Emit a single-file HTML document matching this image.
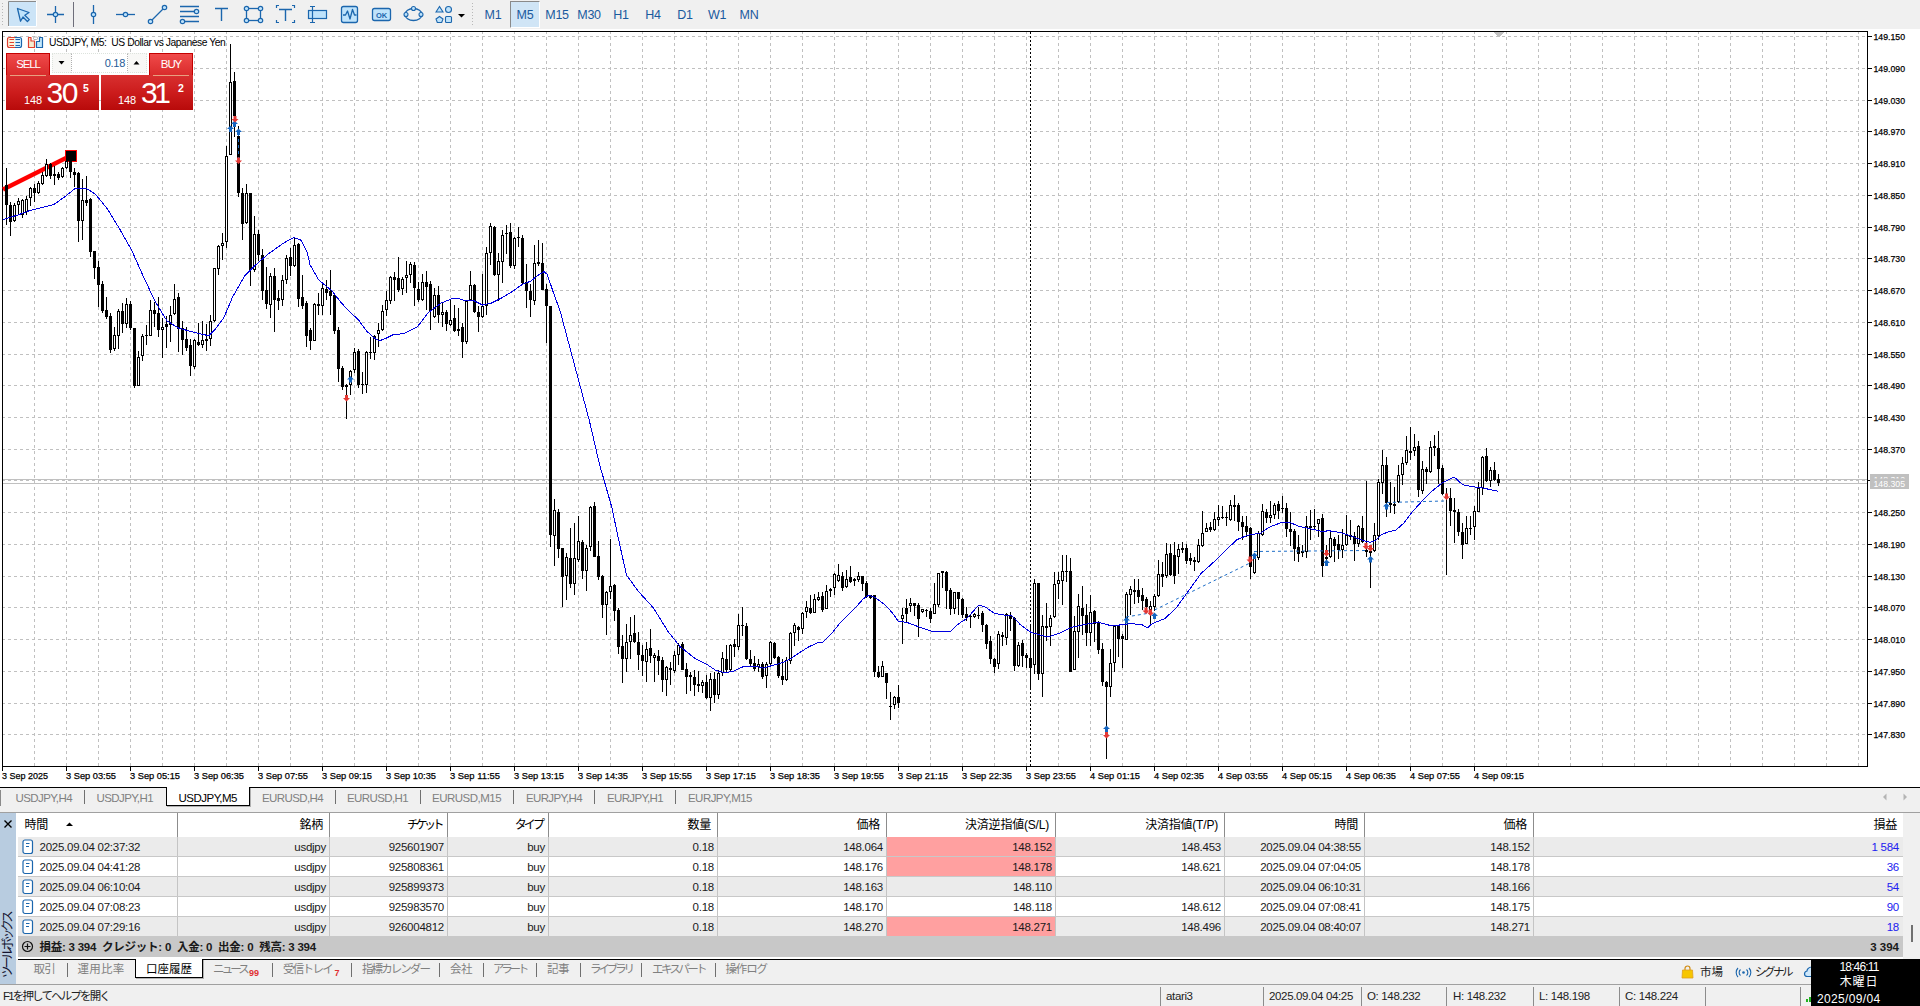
<!DOCTYPE html><html><head><meta charset="utf-8"><title>USDJPY,M5</title><style>
*{box-sizing:border-box;margin:0;padding:0}
html,body{width:1920px;height:1006px;overflow:hidden;background:#f0f0f0}
body{position:relative;font-family:"Liberation Sans","Noto Sans CJK JP",sans-serif;font-size:12px;color:#000}
.abs{position:absolute}
.tf{position:absolute;top:1px;height:27px;width:32px;line-height:28px;text-align:center;color:#1a5a9e;font-size:12.5px;letter-spacing:-0.3px}
.tfsel{background:#d0e5f6;border-left:1px solid #8a8a8a;border-top:1px solid #8a8a8a;border-right:1px solid #fff;border-bottom:1px solid #fff;line-height:26px}
.ctab{position:absolute;top:791px;height:14px;line-height:14px;font-size:11.5px;color:#808080;white-space:nowrap;letter-spacing:-0.35px}
.csep{position:absolute;top:790px;width:1px;height:14px;background:#707070}
.btab{position:absolute;top:961.5px;height:14px;line-height:14px;font-size:11.5px;color:#808080;white-space:nowrap;letter-spacing:-0.3px}
.bsep{position:absolute;top:963px;width:1px;height:14px;background:#707070}
.hd{position:absolute;top:813px;height:24px;line-height:25px;font-size:12px;text-align:right;padding-right:6px;white-space:nowrap;border-right:1px solid #8c8c8c;letter-spacing:-0.2px}
.row{position:absolute;left:18px;width:1885px;height:20px;border-bottom:1px solid #c8c8c8}
.c{position:absolute;top:0;height:19px;line-height:20px;font-size:11.5px;text-align:right;padding-right:3px;border-right:1px solid #c4c4c4;white-space:nowrap;color:#1a1a1a;letter-spacing:-0.25px}
.st{position:absolute;top:989px;height:14px;line-height:14px;font-size:11.5px;white-space:nowrap;color:#222;letter-spacing:-0.35px}
.ssep{position:absolute;top:987px;width:1px;height:19px;background:#8c8c8c}
</style></head><body>
<svg id="chart" width="1920" height="790" viewBox="0 0 1920 790" style="position:absolute;left:0;top:0" shape-rendering="crispEdges">
<rect x="0" y="29" width="1920" height="758" fill="#fff"/>
<path d="M2 36.5H1867M2 68.5H1867M2 100.5H1867M2 131.5H1867M2 163.5H1867M2 195.5H1867M2 227.5H1867M2 258.5H1867M2 290.5H1867M2 322.5H1867M2 354.5H1867M2 385.5H1867M2 417.5H1867M2 449.5H1867M2 480.5H1867M2 512.5H1867M2 544.5H1867M2 576.5H1867M2 607.5H1867M2 639.5H1867M2 671.5H1867M2 703.5H1867M2 734.5H1867" stroke="#c0c0c0" stroke-width="1" stroke-dasharray="3 3" fill="none"/>
<path d="M34.5 31V766M66.5 31V766M98.5 31V766M130.5 31V766M162.5 31V766M194.5 31V766M226.5 31V766M258.5 31V766M290.5 31V766M322.5 31V766M354.5 31V766M386.5 31V766M418.5 31V766M450.5 31V766M482.5 31V766M514.5 31V766M546.5 31V766M578.5 31V766M610.5 31V766M642.5 31V766M674.5 31V766M706.5 31V766M738.5 31V766M770.5 31V766M802.5 31V766M834.5 31V766M866.5 31V766M898.5 31V766M930.5 31V766M962.5 31V766M994.5 31V766M1026.5 31V766M1058.5 31V766M1090.5 31V766M1122.5 31V766M1154.5 31V766M1186.5 31V766M1218.5 31V766M1250.5 31V766M1282.5 31V766M1314.5 31V766M1346.5 31V766M1378.5 31V766M1410.5 31V766M1442.5 31V766M1474.5 31V766M1506.5 31V766M1538.5 31V766M1570.5 31V766M1602.5 31V766M1634.5 31V766M1666.5 31V766M1698.5 31V766M1730.5 31V766M1762.5 31V766M1794.5 31V766M1826.5 31V766M1858.5 31V766" stroke="#c0c0c0" stroke-width="1" stroke-dasharray="3 3" fill="none"/>
<path d="M3 479.5H1867M3 483.5H1867" stroke="#c0c0c0" stroke-width="1" fill="none"/>
<path d="M1493 32H1504L1498.5 37.5Z" fill="#c0c0c0"/>
<path d="M1030.5 32V766" stroke="#000" stroke-width="1" stroke-dasharray="2 2" fill="none"/>
<path d="M2 31.5H1868M2.5 31V771M1867.5 31V767M2 766.5H1868" stroke="#000" stroke-width="1" fill="none"/>
<path d="M1868 36.5H1872M1868 68.5H1872M1868 100.5H1872M1868 131.5H1872M1868 163.5H1872M1868 195.5H1872M1868 227.5H1872M1868 258.5H1872M1868 290.5H1872M1868 322.5H1872M1868 354.5H1872M1868 385.5H1872M1868 417.5H1872M1868 449.5H1872M1868 480.5H1872M1868 512.5H1872M1868 544.5H1872M1868 576.5H1872M1868 607.5H1872M1868 639.5H1872M1868 671.5H1872M1868 703.5H1872M1868 734.5H1872" stroke="#000" stroke-width="1" fill="none"/>
<path d="M66.5 767V771M130.5 767V771M194.5 767V771M258.5 767V771M322.5 767V771M386.5 767V771M450.5 767V771M514.5 767V771M578.5 767V771M642.5 767V771M706.5 767V771M770.5 767V771M834.5 767V771M898.5 767V771M962.5 767V771M1026.5 767V771M1090.5 767V771M1154.5 767V771M1218.5 767V771M1282.5 767V771M1346.5 767V771M1410.5 767V771M1474.5 767V771" stroke="#000" stroke-width="1" fill="none"/>
<g font-family="'Liberation Sans',sans-serif" font-size="9.7px" fill="#000" stroke="#000" stroke-width="0.25" shape-rendering="auto">
<text x="1873.5" y="39.6" textLength="31.5" lengthAdjust="spacingAndGlyphs">149.150</text>
<text x="1873.5" y="71.6" textLength="31.5" lengthAdjust="spacingAndGlyphs">149.090</text>
<text x="1873.5" y="103.6" textLength="31.5" lengthAdjust="spacingAndGlyphs">149.030</text>
<text x="1873.5" y="134.6" textLength="31.5" lengthAdjust="spacingAndGlyphs">148.970</text>
<text x="1873.5" y="166.6" textLength="31.5" lengthAdjust="spacingAndGlyphs">148.910</text>
<text x="1873.5" y="198.6" textLength="31.5" lengthAdjust="spacingAndGlyphs">148.850</text>
<text x="1873.5" y="230.6" textLength="31.5" lengthAdjust="spacingAndGlyphs">148.790</text>
<text x="1873.5" y="261.6" textLength="31.5" lengthAdjust="spacingAndGlyphs">148.730</text>
<text x="1873.5" y="293.6" textLength="31.5" lengthAdjust="spacingAndGlyphs">148.670</text>
<text x="1873.5" y="325.6" textLength="31.5" lengthAdjust="spacingAndGlyphs">148.610</text>
<text x="1873.5" y="357.6" textLength="31.5" lengthAdjust="spacingAndGlyphs">148.550</text>
<text x="1873.5" y="388.6" textLength="31.5" lengthAdjust="spacingAndGlyphs">148.490</text>
<text x="1873.5" y="420.6" textLength="31.5" lengthAdjust="spacingAndGlyphs">148.430</text>
<text x="1873.5" y="452.6" textLength="31.5" lengthAdjust="spacingAndGlyphs">148.370</text>
<text x="1873.5" y="483.6" textLength="31.5" lengthAdjust="spacingAndGlyphs">148.310</text>
<text x="1873.5" y="515.6" textLength="31.5" lengthAdjust="spacingAndGlyphs">148.250</text>
<text x="1873.5" y="547.6" textLength="31.5" lengthAdjust="spacingAndGlyphs">148.190</text>
<text x="1873.5" y="579.6" textLength="31.5" lengthAdjust="spacingAndGlyphs">148.130</text>
<text x="1873.5" y="610.6" textLength="31.5" lengthAdjust="spacingAndGlyphs">148.070</text>
<text x="1873.5" y="642.6" textLength="31.5" lengthAdjust="spacingAndGlyphs">148.010</text>
<text x="1873.5" y="674.6" textLength="31.5" lengthAdjust="spacingAndGlyphs">147.950</text>
<text x="1873.5" y="706.6" textLength="31.5" lengthAdjust="spacingAndGlyphs">147.890</text>
<text x="1873.5" y="737.6" textLength="31.5" lengthAdjust="spacingAndGlyphs">147.830</text>
<text x="2" y="779.2" textLength="46" lengthAdjust="spacingAndGlyphs">3 Sep 2025</text>
<text x="66" y="779.2" textLength="50" lengthAdjust="spacingAndGlyphs">3 Sep 03:55</text>
<text x="130" y="779.2" textLength="50" lengthAdjust="spacingAndGlyphs">3 Sep 05:15</text>
<text x="194" y="779.2" textLength="50" lengthAdjust="spacingAndGlyphs">3 Sep 06:35</text>
<text x="258" y="779.2" textLength="50" lengthAdjust="spacingAndGlyphs">3 Sep 07:55</text>
<text x="322" y="779.2" textLength="50" lengthAdjust="spacingAndGlyphs">3 Sep 09:15</text>
<text x="386" y="779.2" textLength="50" lengthAdjust="spacingAndGlyphs">3 Sep 10:35</text>
<text x="450" y="779.2" textLength="50" lengthAdjust="spacingAndGlyphs">3 Sep 11:55</text>
<text x="514" y="779.2" textLength="50" lengthAdjust="spacingAndGlyphs">3 Sep 13:15</text>
<text x="578" y="779.2" textLength="50" lengthAdjust="spacingAndGlyphs">3 Sep 14:35</text>
<text x="642" y="779.2" textLength="50" lengthAdjust="spacingAndGlyphs">3 Sep 15:55</text>
<text x="706" y="779.2" textLength="50" lengthAdjust="spacingAndGlyphs">3 Sep 17:15</text>
<text x="770" y="779.2" textLength="50" lengthAdjust="spacingAndGlyphs">3 Sep 18:35</text>
<text x="834" y="779.2" textLength="50" lengthAdjust="spacingAndGlyphs">3 Sep 19:55</text>
<text x="898" y="779.2" textLength="50" lengthAdjust="spacingAndGlyphs">3 Sep 21:15</text>
<text x="962" y="779.2" textLength="50" lengthAdjust="spacingAndGlyphs">3 Sep 22:35</text>
<text x="1026" y="779.2" textLength="50" lengthAdjust="spacingAndGlyphs">3 Sep 23:55</text>
<text x="1090" y="779.2" textLength="50" lengthAdjust="spacingAndGlyphs">4 Sep 01:15</text>
<text x="1154" y="779.2" textLength="50" lengthAdjust="spacingAndGlyphs">4 Sep 02:35</text>
<text x="1218" y="779.2" textLength="50" lengthAdjust="spacingAndGlyphs">4 Sep 03:55</text>
<text x="1282" y="779.2" textLength="50" lengthAdjust="spacingAndGlyphs">4 Sep 05:15</text>
<text x="1346" y="779.2" textLength="50" lengthAdjust="spacingAndGlyphs">4 Sep 06:35</text>
<text x="1410" y="779.2" textLength="50" lengthAdjust="spacingAndGlyphs">4 Sep 07:55</text>
<text x="1474" y="779.2" textLength="50" lengthAdjust="spacingAndGlyphs">4 Sep 09:15</text>
</g>
<rect x="1870" y="474" width="39" height="15" fill="#c0c0c0"/>
<g font-family="'Liberation Sans',sans-serif" font-size="9.7px" fill="#fff" shape-rendering="auto"><text x="1873.5" y="486.6" textLength="31.5" lengthAdjust="spacingAndGlyphs">148.305</text></g>
<clipPath id="cp1"><rect x="1870" y="475" width="39" height="3.6"/></clipPath>
<g font-family="'Liberation Sans',sans-serif" font-size="9.7px" fill="#fff" shape-rendering="auto" clip-path="url(#cp1)"><text x="1873.5" y="482.6" textLength="31.5" lengthAdjust="spacingAndGlyphs">148.312</text></g>
<path d="M1868 480.5H1870" stroke="#000" stroke-width="1"/>
<path d="M3 189.5L68 157" stroke="#ff0000" stroke-width="4.2" fill="none" shape-rendering="auto"/>
<rect x="65.5" y="150.5" width="11" height="11" fill="#000" stroke="#ff0000" stroke-width="1"/>
<path d="M6.5 168V225M10.5 202V236M14.5 203V222M18.5 198V214M22.5 199V218M26.5 196V215M30.5 187V206M34.5 184V202M38.5 181V194M42.5 172V185M46.5 159V177M50.5 163V179M54.5 166V185M58.5 172V180M62.5 167V178M66.5 158V169M70.5 160V178M74.5 168V187M78.5 172V242M82.5 179V240M86.5 176V206M90.5 198V257M94.5 251V279M98.5 261V307M102.5 281V313M106.5 297V319M110.5 313V353M114.5 327V351M118.5 309V349M122.5 303V333M126.5 298V328M130.5 301V330M134.5 328V388M138.5 351V386M142.5 334V361M146.5 325V345M150.5 300V336M154.5 302V327M158.5 297V337M162.5 318V358M166.5 316V348M170.5 306V342M174.5 284V315M178.5 293V352M182.5 321V355M186.5 327V351M190.5 339V376M194.5 339V369M198.5 323V346M202.5 321V348M206.5 324V351M210.5 315V346M214.5 268V322M218.5 245V275M222.5 233V260M226.5 146V248M230.5 44V155M234.5 72V137M238.5 126V197M242.5 188V240M246.5 184V224M250.5 193V286M254.5 216V272M258.5 230V261M262.5 249V300M266.5 267V309M270.5 273V318M274.5 268V332M278.5 290V310M282.5 275V306M286.5 255V284M290.5 248V276M294.5 237V267M298.5 243V307M302.5 275V309M306.5 301V347M310.5 328V350M314.5 303V341M318.5 293V315M322.5 282V315M326.5 280V300M330.5 270V315M334.5 294V334M338.5 327V382M342.5 366V390M346.5 384V419M350.5 370V395M354.5 348V373M358.5 349V388M362.5 372V394M366.5 351V393M370.5 337V359M374.5 335V360M378.5 323V347M382.5 305V331M386.5 291V316M390.5 276V304M394.5 272V301M398.5 257V292M402.5 277V295M406.5 261V293M410.5 262V283M414.5 262V306M418.5 282V302M422.5 274V301M426.5 271V310M430.5 281V330M434.5 288V318M438.5 286V323M442.5 302V327M446.5 310V331M450.5 299V326M454.5 305V332M458.5 308V336M462.5 323V358M466.5 300V344M470.5 271V301M474.5 284V313M478.5 306V332M482.5 274V318M486.5 247V315M490.5 223V265M494.5 226V276M498.5 253V301M502.5 230V283M506.5 225V254M510.5 223V268M514.5 237V269M518.5 227V247M522.5 235V284M526.5 264V308M530.5 284V317M534.5 245V305M538.5 240V266M542.5 243V290M546.5 284V343M550.5 306V547M554.5 499V566M558.5 509V558M562.5 548V607M566.5 553V600M570.5 528V588M574.5 523V595M578.5 516V562M582.5 540V579M586.5 545V591M590.5 506V551M594.5 502V557M598.5 541V580M602.5 575V618M606.5 591V635M610.5 539V599M614.5 584V621M618.5 608V654M622.5 635V683M626.5 624V672M630.5 617V659M634.5 615V643M638.5 632V670M642.5 645V676M646.5 642V682M650.5 629V663M654.5 653V682M658.5 650V675M662.5 657V692M666.5 666V696M670.5 662V685M674.5 651V673M678.5 643V665M682.5 642V670M686.5 663V694M690.5 672V691M694.5 670V696M698.5 671V692M702.5 680V693M706.5 675V699M710.5 673V711M714.5 672V703M718.5 670V699M722.5 652V676M726.5 645V673M730.5 644V671M734.5 639V657M738.5 614V650M742.5 607V636M746.5 623V660M750.5 650V666M754.5 656V671M758.5 659V672M762.5 662V679M766.5 662V688M770.5 641V666M774.5 642V659M778.5 656V678M782.5 659V685M786.5 657V681M790.5 632V664M794.5 623V646M798.5 626V641M802.5 612V634M806.5 601V618M810.5 595V614M814.5 594V613M818.5 592V601M822.5 592V612M826.5 585V609M830.5 588V597M834.5 573V595M838.5 564V582M842.5 572V591M846.5 570V588M850.5 566V583M854.5 578V586M858.5 572V582M862.5 576V591M866.5 581V598M870.5 595V599M874.5 595V677M878.5 666V678M882.5 661V677M886.5 673V699M890.5 692V720M894.5 696V709M898.5 685V708M902.5 608V644M906.5 599V623M910.5 598V612M914.5 603V616M918.5 603V637M922.5 609V613M926.5 609V617M930.5 608V623M934.5 583V614M938.5 573V607M942.5 571V588M946.5 571V609M950.5 588V615M954.5 592V614M958.5 592V615M962.5 598V618M966.5 607V621M970.5 615V628M974.5 613V618M978.5 607V619M982.5 611V632M986.5 624V649M990.5 636V664M994.5 658V673M998.5 631V669M1002.5 632V646M1006.5 613V645M1010.5 612V631M1014.5 617V671M1018.5 642V667M1022.5 640V667M1026.5 653V668M1030.5 626V688M1034.5 579V674M1038.5 583V680M1042.5 615V697M1046.5 603V641M1050.5 615V646M1054.5 572V618M1058.5 572V599M1062.5 555V605M1066.5 555V582M1070.5 558V672M1074.5 616V670M1078.5 594V658M1082.5 586V635M1086.5 604V646M1090.5 595V646M1094.5 610V642M1098.5 621V654M1102.5 643V686M1106.5 681V759M1110.5 649V697M1114.5 625V672M1118.5 625V657M1122.5 634V668M1126.5 592V640M1130.5 586V615M1134.5 579V604M1138.5 579V603M1142.5 588V610M1146.5 597V612M1150.5 601V626M1154.5 594V611M1158.5 560V597M1162.5 562V587M1166.5 543V578M1170.5 544V576M1174.5 542V584M1178.5 544V574M1182.5 542V553M1186.5 544V564M1190.5 553V565M1194.5 557V571M1198.5 539V563M1202.5 511V547M1206.5 523V532M1210.5 522V532M1214.5 512V531M1218.5 505V526M1222.5 506V519M1226.5 512V526M1230.5 500V521M1234.5 495V521M1238.5 503V531M1242.5 516V540M1246.5 516V537M1250.5 527V579M1254.5 554V574M1258.5 531V560M1262.5 504V536M1266.5 509V523M1270.5 501V523M1274.5 503V519M1278.5 501V519M1282.5 496V513M1286.5 503V537M1290.5 512V546M1294.5 529V561M1298.5 535V562M1302.5 545V557M1306.5 516V558M1310.5 510V540M1314.5 509V530M1318.5 519V537M1322.5 514V577M1326.5 545V560M1330.5 531V558M1334.5 537V562M1338.5 535V559M1342.5 529V558M1346.5 515V546M1350.5 520V540M1354.5 532V561M1358.5 525V547M1362.5 516V543M1366.5 481V557M1370.5 550V588M1374.5 523V552M1378.5 479V540M1382.5 450V494M1386.5 457V517M1390.5 482V513M1394.5 487V514M1398.5 465V503M1402.5 457V485M1406.5 436V465M1410.5 427V460M1414.5 434V456M1418.5 441V497M1422.5 461V494M1426.5 467V484M1430.5 441V473M1434.5 435V456M1438.5 431V484M1442.5 465V495M1446.5 488V575M1450.5 488V526M1454.5 498V543M1458.5 509V536M1462.5 523V559M1466.5 516V544M1470.5 516V535M1474.5 506V540M1478.5 482V512M1482.5 456V495M1486.5 448V482M1490.5 467V487M1494.5 462V481M1498.5 474V486" stroke="#000" stroke-width="1" fill="none"/>
<path d="M5 185h3V205h-3ZM9 205h3V222h-3ZM33 188h3V193h-3ZM49 164h3V176h-3ZM53 174h3V176h-3ZM57 174h3V178h-3ZM69 161h3V172h-3ZM73 172h3V175h-3ZM77 173h3V221h-3ZM85 200h3V203h-3ZM89 199h3V252h-3ZM93 251h3V268h-3ZM97 267h3V285h-3ZM101 284h3V311h-3ZM105 310h3V317h-3ZM109 316h3V350h-3ZM121 311h3V324h-3ZM129 304h3V328h-3ZM133 328h3V386h-3ZM145 335h3V336h-3ZM153 310h3V314h-3ZM157 313h3V330h-3ZM165 324h3V327h-3ZM177 297h3V329h-3ZM181 328h3V340h-3ZM185 339h3V348h-3ZM189 345h3V366h-3ZM197 342h3V345h-3ZM205 339h3V341h-3ZM233 81h3V116h-3ZM237 136h3V193h-3ZM241 193h3V224h-3ZM249 193h3V270h-3ZM257 234h3V255h-3ZM261 255h3V291h-3ZM265 290h3V304h-3ZM273 276h3V300h-3ZM277 298h3V301h-3ZM289 257h3V266h-3ZM297 244h3V299h-3ZM301 297h3V306h-3ZM305 303h3V336h-3ZM309 330h3V341h-3ZM317 304h3V306h-3ZM325 289h3V293h-3ZM329 291h3V296h-3ZM333 295h3V331h-3ZM337 330h3V369h-3ZM341 368h3V387h-3ZM345 385h3V387h-3ZM357 351h3V385h-3ZM361 384h3V385h-3ZM369 352h3V353h-3ZM393 277h3V280h-3ZM397 278h3V290h-3ZM413 265h3V288h-3ZM417 289h3V300h-3ZM425 282h3V287h-3ZM429 284h3V311h-3ZM437 295h3V315h-3ZM445 312h3V324h-3ZM453 318h3V331h-3ZM457 329h3V331h-3ZM461 327h3V342h-3ZM473 285h3V312h-3ZM477 312h3V317h-3ZM493 227h3V275h-3ZM505 233h3V234h-3ZM509 232h3V266h-3ZM517 237h3V238h-3ZM521 238h3V283h-3ZM525 282h3V291h-3ZM529 291h3V300h-3ZM537 262h3V264h-3ZM541 263h3V290h-3ZM545 289h3V306h-3ZM549 306h3V535h-3ZM557 512h3V549h-3ZM561 548h3V577h-3ZM569 558h3V584h-3ZM581 542h3V571h-3ZM593 506h3V557h-3ZM597 556h3V577h-3ZM601 576h3V605h-3ZM613 585h3V611h-3ZM617 610h3V647h-3ZM621 646h3V659h-3ZM633 633h3V642h-3ZM637 642h3V655h-3ZM641 655h3V661h-3ZM649 648h3V656h-3ZM657 656h3V661h-3ZM661 660h3V680h-3ZM669 668h3V670h-3ZM681 644h3V670h-3ZM685 669h3V677h-3ZM689 675h3V677h-3ZM693 677h3V685h-3ZM697 684h3V686h-3ZM705 682h3V698h-3ZM713 679h3V695h-3ZM725 659h3V670h-3ZM733 644h3V647h-3ZM741 625h3V626h-3ZM745 626h3V659h-3ZM749 659h3V664h-3ZM753 663h3V669h-3ZM761 664h3V677h-3ZM773 643h3V658h-3ZM777 657h3V676h-3ZM781 676h3V680h-3ZM797 627h3V630h-3ZM809 608h3V613h-3ZM821 596h3V610h-3ZM829 589h3V591h-3ZM841 576h3V588h-3ZM849 577h3V582h-3ZM853 579h3V581h-3ZM861 576h3V584h-3ZM865 583h3V597h-3ZM869 595h3V598h-3ZM873 595h3V672h-3ZM877 672h3V677h-3ZM885 673h3V683h-3ZM889 706h3V707h-3ZM897 697h3V703h-3ZM905 608h3V614h-3ZM913 603h3V606h-3ZM917 605h3V619h-3ZM925 610h3V611h-3ZM929 611h3V619h-3ZM941 571h3V573h-3ZM945 572h3V591h-3ZM949 590h3V609h-3ZM957 592h3V599h-3ZM961 599h3V615h-3ZM965 614h3V618h-3ZM969 616h3V617h-3ZM977 615h3V616h-3ZM981 613h3V625h-3ZM985 625h3V644h-3ZM989 641h3V659h-3ZM993 659h3V667h-3ZM1001 635h3V637h-3ZM1009 615h3V619h-3ZM1013 618h3V666h-3ZM1021 643h3V656h-3ZM1025 655h3V658h-3ZM1029 658h3V668h-3ZM1037 583h3V674h-3ZM1045 626h3V628h-3ZM1065 571h3V572h-3ZM1069 571h3V672h-3ZM1081 608h3V616h-3ZM1085 615h3V633h-3ZM1093 611h3V624h-3ZM1097 623h3V650h-3ZM1101 649h3V682h-3ZM1105 682h3V687h-3ZM1117 626h3V639h-3ZM1121 636h3V639h-3ZM1133 590h3V592h-3ZM1137 590h3V597h-3ZM1141 595h3V601h-3ZM1145 599h3V607h-3ZM1161 574h3V577h-3ZM1169 553h3V575h-3ZM1173 555h3V576h-3ZM1181 548h3V550h-3ZM1185 548h3V561h-3ZM1189 558h3V561h-3ZM1193 560h3V562h-3ZM1209 527h3V530h-3ZM1221 517h3V518h-3ZM1225 517h3V518h-3ZM1233 505h3V507h-3ZM1237 505h3V522h-3ZM1241 522h3V527h-3ZM1245 526h3V532h-3ZM1249 528h3V567h-3ZM1265 512h3V518h-3ZM1277 504h3V511h-3ZM1281 508h3V509h-3ZM1285 508h3V529h-3ZM1289 529h3V532h-3ZM1293 531h3V549h-3ZM1297 547h3V554h-3ZM1301 551h3V553h-3ZM1309 526h3V528h-3ZM1313 526h3V527h-3ZM1321 518h3V566h-3ZM1325 557h3V559h-3ZM1333 539h3V546h-3ZM1337 544h3V550h-3ZM1349 535h3V537h-3ZM1353 536h3V544h-3ZM1361 528h3V542h-3ZM1365 550h3V552h-3ZM1369 551h3V553h-3ZM1385 465h3V503h-3ZM1389 503h3V505h-3ZM1393 504h3V506h-3ZM1409 451h3V453h-3ZM1417 446h3V490h-3ZM1425 469h3V472h-3ZM1433 446h3V448h-3ZM1437 448h3V469h-3ZM1441 468h3V494h-3ZM1445 494h3V496h-3ZM1449 498h3V511h-3ZM1453 510h3V512h-3ZM1457 512h3V532h-3ZM1461 532h3V545h-3ZM1469 528h3V529h-3ZM1485 456h3V481h-3ZM1493 470h3V480h-3ZM1497 479h3V483h-3Z" fill="#000"/>
<path d="M13.5 205.5h2V220.5h-2ZM17.5 201.5h2V204.5h-2ZM21.5 200.5h2V214.5h-2ZM25.5 199.5h2V211.5h-2ZM29.5 188.5h2V197.5h-2ZM37.5 183.5h2V192.5h-2ZM41.5 175.5h2V183.5h-2ZM45.5 164.5h2V175.5h-2ZM61.5 168.5h2V176.5h-2ZM65.5 161.5h2V167.5h-2ZM81.5 200.5h2V220.5h-2ZM113.5 335.5h2V348.5h-2ZM117.5 311.5h2V335.5h-2ZM125.5 304.5h2V323.5h-2ZM137.5 357.5h2V385.5h-2ZM141.5 336.5h2V355.5h-2ZM149.5 310.5h2V335.5h-2ZM161.5 327.5h2V329.5h-2ZM169.5 315.5h2V324.5h-2ZM173.5 299.5h2V313.5h-2ZM193.5 340.5h2V366.5h-2ZM201.5 340.5h2V344.5h-2ZM209.5 321.5h2V338.5h-2ZM213.5 268.5h2V320.5h-2ZM217.5 246.5h2V268.5h-2ZM221.5 243.5h2V245.5h-2ZM225.5 156.5h2V241.5h-2ZM229.5 82.5h2V154.5h-2ZM245.5 193.5h2V222.5h-2ZM253.5 234.5h2V269.5h-2ZM269.5 276.5h2V304.5h-2ZM281.5 280.5h2V299.5h-2ZM285.5 258.5h2V279.5h-2ZM293.5 245.5h2V265.5h-2ZM313.5 304.5h2V340.5h-2ZM321.5 288.5h2V305.5h-2ZM349.5 371.5h2V384.5h-2ZM353.5 352.5h2V369.5h-2ZM365.5 352.5h2V384.5h-2ZM373.5 336.5h2V352.5h-2ZM377.5 330.5h2V333.5h-2ZM381.5 311.5h2V329.5h-2ZM385.5 300.5h2V309.5h-2ZM389.5 277.5h2V300.5h-2ZM401.5 279.5h2V288.5h-2ZM405.5 275.5h2V277.5h-2ZM409.5 264.5h2V274.5h-2ZM421.5 282.5h2V299.5h-2ZM433.5 295.5h2V316.5h-2ZM441.5 312.5h2V314.5h-2ZM449.5 320.5h2V324.5h-2ZM465.5 301.5h2V341.5h-2ZM469.5 285.5h2V299.5h-2ZM481.5 306.5h2V316.5h-2ZM485.5 253.5h2V305.5h-2ZM489.5 226.5h2V252.5h-2ZM497.5 261.5h2V274.5h-2ZM501.5 235.5h2V261.5h-2ZM513.5 238.5h2V265.5h-2ZM533.5 263.5h2V300.5h-2ZM553.5 510.5h2V535.5h-2ZM565.5 557.5h2V575.5h-2ZM573.5 558.5h2V583.5h-2ZM577.5 541.5h2V559.5h-2ZM585.5 548.5h2V570.5h-2ZM589.5 507.5h2V546.5h-2ZM605.5 592.5h2V604.5h-2ZM609.5 586.5h2V591.5h-2ZM625.5 642.5h2V658.5h-2ZM629.5 635.5h2V641.5h-2ZM645.5 649.5h2V661.5h-2ZM653.5 655.5h2V657.5h-2ZM665.5 667.5h2V679.5h-2ZM673.5 655.5h2V670.5h-2ZM677.5 645.5h2V654.5h-2ZM701.5 682.5h2V685.5h-2ZM709.5 679.5h2V697.5h-2ZM717.5 673.5h2V694.5h-2ZM721.5 658.5h2V672.5h-2ZM729.5 645.5h2V669.5h-2ZM737.5 625.5h2V646.5h-2ZM757.5 664.5h2V666.5h-2ZM765.5 664.5h2V675.5h-2ZM769.5 642.5h2V663.5h-2ZM785.5 660.5h2V679.5h-2ZM789.5 633.5h2V660.5h-2ZM793.5 625.5h2V632.5h-2ZM801.5 613.5h2V628.5h-2ZM805.5 607.5h2V611.5h-2ZM813.5 599.5h2V612.5h-2ZM817.5 597.5h2V599.5h-2ZM825.5 591.5h2V608.5h-2ZM833.5 574.5h2V587.5h-2ZM837.5 575.5h2V580.5h-2ZM845.5 579.5h2V586.5h-2ZM857.5 576.5h2V579.5h-2ZM881.5 666.5h2V676.5h-2ZM893.5 697.5h2V704.5h-2ZM901.5 615.5h2V618.5h-2ZM909.5 603.5h2V605.5h-2ZM921.5 609.5h2V611.5h-2ZM933.5 604.5h2V613.5h-2ZM937.5 573.5h2V604.5h-2ZM953.5 592.5h2V608.5h-2ZM973.5 614.5h2V616.5h-2ZM997.5 634.5h2V663.5h-2ZM1005.5 614.5h2V637.5h-2ZM1017.5 645.5h2V665.5h-2ZM1033.5 583.5h2V664.5h-2ZM1041.5 626.5h2V673.5h-2ZM1049.5 618.5h2V626.5h-2ZM1053.5 584.5h2V616.5h-2ZM1057.5 580.5h2V583.5h-2ZM1061.5 571.5h2V580.5h-2ZM1073.5 631.5h2V669.5h-2ZM1077.5 606.5h2V631.5h-2ZM1089.5 612.5h2V632.5h-2ZM1109.5 663.5h2V686.5h-2ZM1113.5 626.5h2V662.5h-2ZM1125.5 594.5h2V639.5h-2ZM1129.5 589.5h2V594.5h-2ZM1149.5 606.5h2V609.5h-2ZM1153.5 596.5h2V606.5h-2ZM1157.5 574.5h2V595.5h-2ZM1165.5 554.5h2V575.5h-2ZM1177.5 549.5h2V556.5h-2ZM1197.5 545.5h2V561.5h-2ZM1201.5 533.5h2V545.5h-2ZM1205.5 528.5h2V531.5h-2ZM1213.5 519.5h2V529.5h-2ZM1217.5 517.5h2V519.5h-2ZM1229.5 505.5h2V519.5h-2ZM1253.5 555.5h2V572.5h-2ZM1257.5 533.5h2V557.5h-2ZM1261.5 511.5h2V534.5h-2ZM1269.5 515.5h2V517.5h-2ZM1273.5 505.5h2V514.5h-2ZM1305.5 526.5h2V551.5h-2ZM1317.5 519.5h2V523.5h-2ZM1329.5 538.5h2V556.5h-2ZM1341.5 545.5h2V549.5h-2ZM1345.5 535.5h2V544.5h-2ZM1357.5 526.5h2V543.5h-2ZM1373.5 535.5h2V550.5h-2ZM1377.5 482.5h2V535.5h-2ZM1381.5 465.5h2V482.5h-2ZM1397.5 475.5h2V501.5h-2ZM1401.5 463.5h2V474.5h-2ZM1405.5 450.5h2V462.5h-2ZM1413.5 447.5h2V450.5h-2ZM1421.5 469.5h2V490.5h-2ZM1429.5 447.5h2V471.5h-2ZM1465.5 528.5h2V543.5h-2ZM1473.5 511.5h2V526.5h-2ZM1477.5 488.5h2V511.5h-2ZM1481.5 457.5h2V487.5h-2ZM1489.5 470.5h2V480.5h-2Z" fill="#fff" stroke="#000" stroke-width="1"/>
<path d="M3.0 219.5 L17.9 215.0 L29.8 210.5 L44.7 206.9 L53.7 204.6 L65.6 196.2 L74.6 188.8 L86.5 188.5 L95.4 194.1 L107.4 209.0 L119.3 228.4 L131.2 249.3 L143.2 276.1 L155.1 301.5 L167.0 320.9 L178.9 328.3 L193.9 332.2 L208.8 335.8 L214.7 329.8 L223.7 317.9 L232.6 297.0 L244.6 276.1 L256.5 264.2 L268.4 253.8 L283.3 243.3 L293.8 237.4 L301.2 240.3 L307.2 252.3 L310.0 264.7 L318.7 280.0 L331.9 290.9 L340.6 301.9 L349.4 311.7 L358.1 319.4 L366.9 331.4 L375.6 339.0 L380.0 340.6 L386.6 338.0 L393.1 334.7 L404.1 333.6 L417.2 327.0 L428.1 312.8 L441.2 303.0 L452.2 298.6 L458.7 298.6 L465.3 300.8 L474.0 300.8 L482.8 305.1 L491.5 303.0 L502.5 297.5 L513.4 290.9 L522.2 284.4 L530.9 281.1 L537.5 275.6 L544.0 271.7 L547.3 274.5 L552.8 290.9 L560.0 310.6 L589.2 420.0 L599.6 464.7 L611.6 506.5 L620.5 548.2 L626.5 575.0 L638.4 591.4 L653.3 607.8 L668.2 631.7 L680.1 646.6 L695.0 658.5 L707.0 664.5 L715.9 670.4 L724.9 672.8 L733.8 671.0 L742.7 666.9 L754.7 666.0 L763.6 668.1 L775.5 664.5 L780.0 663.6 L789.9 659.3 L799.9 652.3 L809.8 646.3 L817.8 642.8 L822.7 642.4 L831.7 633.4 L839.6 623.5 L847.6 615.5 L855.5 607.6 L863.5 598.6 L868.5 595.3 L875.4 597.6 L883.4 603.6 L891.3 611.6 L898.3 621.1 L907.2 622.5 L915.2 625.5 L923.1 628.5 L933.1 631.8 L943.0 632.0 L949.9 631.8 L958.9 623.5 L966.8 618.5 L973.8 610.6 L978.8 605.2 L984.7 606.6 L994.7 613.5 L1004.6 615.1 L1011.6 615.5 L1018.5 622.5 L1020.0 624.5 L1031.1 632.5 L1047.8 637.0 L1059.0 633.4 L1070.1 627.8 L1084.0 624.5 L1098.0 622.2 L1111.9 625.9 L1131.4 623.6 L1142.5 625.0 L1147.5 627.8 L1152.2 623.6 L1164.8 618.6 L1175.9 608.3 L1187.0 593.0 L1201.0 573.5 L1214.9 561.0 L1226.0 549.9 L1237.1 539.6 L1248.3 535.1 L1259.4 533.2 L1260.0 533.6 L1269.2 527.2 L1282.1 522.2 L1290.3 522.6 L1298.6 526.3 L1309.7 528.6 L1320.7 531.2 L1329.9 530.9 L1340.9 532.7 L1351.9 536.4 L1363.0 540.4 L1370.3 542.3 L1375.9 540.4 L1381.4 534.5 L1388.7 531.8 L1396.1 529.9 L1403.4 523.5 L1412.6 511.5 L1421.8 501.4 L1432.9 490.4 L1442.1 483.0 L1453.1 477.5 L1455.8 478.4 L1462.3 484.5 L1471.5 486.7 L1480.7 487.6 L1489.9 489.5 L1498.1 491.3" stroke="#0000e0" stroke-width="1" fill="none" shape-rendering="crispEdges" stroke-linejoin="round"/>
<path d="M238.5 133L238.5 160M1126 617L1150 613M1154.5 610L1250 563M1254 551.5L1366 550.5M1387 502.5L1444 501" stroke="#1e6ec8" stroke-width="1" stroke-dasharray="3 3" fill="none" shape-rendering="auto"/>
<path d="M230.5 125.5l3.5 3.5h-2v3h-3v-3h-2z" fill="#1565c0" shape-rendering="auto"/>
<path d="M234.5 120.5l3.5 3.5h-2v3h-3v-3h-2z" fill="#1565c0" shape-rendering="auto"/>
<path d="M238.5 128.5l3.5 3.5h-2v3h-3v-3h-2z" fill="#1565c0" shape-rendering="auto"/>
<path d="M350.5 376.0l3.5 3.5h-2v3h-3v-3h-2z" fill="#1565c0" shape-rendering="auto"/>
<path d="M1126.5 617.0l3.5 3.5h-2v3h-3v-3h-2z" fill="#1565c0" shape-rendering="auto"/>
<path d="M1154.5 612.5l3.5 3.5h-2v3h-3v-3h-2z" fill="#1565c0" shape-rendering="auto"/>
<path d="M1106.5 725.5l3.5 3.5h-2v3h-3v-3h-2z" fill="#1565c0" shape-rendering="auto"/>
<path d="M1254.5 552.5l3.5 3.5h-2v3h-3v-3h-2z" fill="#1565c0" shape-rendering="auto"/>
<path d="M1326.5 559.5l3.5 3.5h-2v3h-3v-3h-2z" fill="#1565c0" shape-rendering="auto"/>
<path d="M1370.5 556.0l3.5 3.5h-2v3h-3v-3h-2z" fill="#1565c0" shape-rendering="auto"/>
<path d="M1386.5 503.0l3.5 3.5h-2v3h-3v-3h-2z" fill="#1565c0" shape-rendering="auto"/>
<path d="M235 122.5l3.5 -3.5h-2v-3h-3v3h-2z" fill="#e53935" shape-rendering="auto"/>
<path d="M238.5 164.0l3.5 -3.5h-2v-3h-3v3h-2z" fill="#e53935" shape-rendering="auto"/>
<path d="M346.5 401.5l3.5 -3.5h-2v-3h-3v3h-2z" fill="#e53935" shape-rendering="auto"/>
<path d="M1146 614.0l3.5 -3.5h-2v-3h-3v3h-2z" fill="#e53935" shape-rendering="auto"/>
<path d="M1150.5 616.0l3.5 -3.5h-2v-3h-3v3h-2z" fill="#e53935" shape-rendering="auto"/>
<path d="M1106.5 738.5l3.5 -3.5h-2v-3h-3v3h-2z" fill="#e53935" shape-rendering="auto"/>
<path d="M1250 563.0l3.5 -3.5h-2v-3h-3v3h-2z" fill="#e53935" shape-rendering="auto"/>
<path d="M1326.5 556.5l3.5 -3.5h-2v-3h-3v3h-2z" fill="#e53935" shape-rendering="auto"/>
<path d="M1366 549.5l3.5 -3.5h-2v-3h-3v3h-2z" fill="#e53935" shape-rendering="auto"/>
<path d="M1370.5 551.5l3.5 -3.5h-2v-3h-3v3h-2z" fill="#e53935" shape-rendering="auto"/>
<path d="M1446.5 500.0l3.5 -3.5h-2v-3h-3v3h-2z" fill="#e53935" shape-rendering="auto"/>
</svg>
<div class="abs" style="left:0;top:0;width:1920px;height:28px;background:#f0f0f0"></div>
<svg class="abs" style="left:0;top:0" width="800" height="29" viewBox="0 0 800 29">
<path d="M2.5 3V27" stroke="#b8b8b8" stroke-width="1" stroke-dasharray="1 2"/><path d="M472.500 3V27" stroke="#b8b8b8" stroke-width="1" stroke-dasharray="1 2"/>
<rect x="8" y="1" width="29" height="26" fill="#cce4f7"/><path d="M8.5 27V1.5H37" stroke="#8a8a8a" fill="none"/><path d="M8 26.500H36.500V1" stroke="#fff" fill="none"/>
<path d="M17.500 8.500L29 12.500L24.800 15.200L29.300 19.600L27.400 21.500L23 17L20.500 21.200Z" fill="#bfe3fb" stroke="#1b66ad" stroke-width="1.300" stroke-linejoin="round"/>
<path d="M55.500 6V23M47 14.500H64" stroke="#1b66ad" stroke-width="1.300"/><circle cx="55.500" cy="14.500" r="2.200" fill="#bfe3fb" stroke="#1b66ad" stroke-width="1.200"/>
<path d="M73.500 2V27" stroke="#6e6e7a" stroke-width="1"/>
<path d="M93.500 5V24" stroke="#1b66ad" stroke-width="1.300"/><circle cx="93.500" cy="14.500" r="2.200" fill="#bfe3fb" stroke="#1b66ad" stroke-width="1.200"/>
<path d="M116 14.500H135" stroke="#1b66ad" stroke-width="1.300"/><circle cx="125.500" cy="14.500" r="2.200" fill="#bfe3fb" stroke="#1b66ad" stroke-width="1.200"/>
<path d="M150.500 21.500L164.500 7.500" stroke="#1b66ad" stroke-width="1.300"/><circle cx="150.500" cy="21.500" r="2.200" fill="#bfe3fb" stroke="#1b66ad" stroke-width="1.200"/><circle cx="164.500" cy="7.500" r="2.200" fill="#bfe3fb" stroke="#1b66ad" stroke-width="1.200"/>
<path d="M180 6.500H199M180 11.500H196M180 16.500H199M183 21.500H199" stroke="#1b66ad" stroke-width="1.300"/><circle cx="196.500" cy="11.500" r="2.200" fill="#bfe3fb" stroke="#1b66ad" stroke-width="1.200"/><circle cx="182.500" cy="21.500" r="2.200" fill="#bfe3fb" stroke="#1b66ad" stroke-width="1.200"/>
<path d="M215 8.500H228M221.500 8.500V21" stroke="#1b66ad" stroke-width="1.400"/>
<rect x="246.500" y="8.500" width="14" height="12" fill="none" stroke="#1b66ad" stroke-width="1.300"/>
<circle cx="246.5" cy="8.5" r="2.200" fill="#bfe3fb" stroke="#1b66ad" stroke-width="1.200"/>
<circle cx="260.5" cy="8.5" r="2.200" fill="#bfe3fb" stroke="#1b66ad" stroke-width="1.200"/>
<circle cx="246.5" cy="20.5" r="2.200" fill="#bfe3fb" stroke="#1b66ad" stroke-width="1.200"/>
<circle cx="260.5" cy="20.5" r="2.200" fill="#bfe3fb" stroke="#1b66ad" stroke-width="1.200"/>
<path d="M279 9.500H292M285.500 9.500V21" stroke="#1b66ad" stroke-width="1.400"/><path d="M276.500 8V5.500H279M292 5.500H294.500V8M276.500 20V22.500H279M292 22.500H294.500V20" stroke="#1b66ad" stroke-width="1.200" fill="none"/>
<rect x="308.500" y="10.500" width="18" height="8" fill="#bfe3fb" stroke="#1b66ad" stroke-width="1.200"/><path d="M310 6.500H315M310 22.500H315M312.500 6.500V22.500" stroke="#1b66ad" stroke-width="1.200" fill="none"/>
<rect x="341.500" y="6.500" width="16" height="16" rx="2" fill="#bfe3fb" stroke="#1b66ad" stroke-width="1.300"/><path d="M343 15H345.500L347.500 11L350 19L352.500 9.500L354.500 15H356.500" stroke="#1b66ad" stroke-width="1.300" fill="none" stroke-linejoin="round"/>
<rect x="372.500" y="8.500" width="18" height="12" rx="2" fill="#bfe3fb" stroke="#1b66ad" stroke-width="1.300"/><text x="381.500" y="17.600" font-size="7.500" font-weight="bold" fill="#1b66ad" text-anchor="middle" font-family="Liberation Sans,sans-serif">OK</text>
<ellipse cx="413.500" cy="14.500" rx="8.500" ry="6" fill="none" stroke="#1b66ad" stroke-width="1.300"/>
<circle cx="413.5" cy="8.5" r="2" fill="#bfe3fb" stroke="#1b66ad" stroke-width="1.100"/>
<circle cx="406" cy="14.5" r="2" fill="#bfe3fb" stroke="#1b66ad" stroke-width="1.100"/>
<circle cx="421" cy="14.5" r="2" fill="#bfe3fb" stroke="#1b66ad" stroke-width="1.100"/>
<path d="M436 12L439.500 6.500L443 12Z" fill="#bfe3fb" stroke="#1b66ad" stroke-width="1.100"/><circle cx="448.500" cy="9.500" r="3" fill="#bfe3fb" stroke="#1b66ad" stroke-width="1.100"/><path d="M439.500 16.500L443 19L441.700 22.500H437.300L436 19Z" fill="#bfe3fb" stroke="#1b66ad" stroke-width="1.100"/><rect x="445.500" y="16.500" width="6" height="6" rx="1" fill="#bfe3fb" stroke="#1b66ad" stroke-width="1.100"/>
<path d="M458 14H465L461.500 17.500Z" fill="#000"/>
</svg>
<div class="tf" style="left:477px">M1</div>
<div class="tf tfsel" style="left:510px;width:30px">M5</div>
<div class="tf" style="left:541px">M15</div>
<div class="tf" style="left:573px">M30</div>
<div class="tf" style="left:605px">H1</div>
<div class="tf" style="left:637px">H4</div>
<div class="tf" style="left:669px">D1</div>
<div class="tf" style="left:701px">W1</div>
<div class="tf" style="left:733px">MN</div>
<svg class="abs" style="left:6px;top:35px" width="40" height="15" viewBox="6 35 40 15">
<rect x="7.500" y="37.500" width="7.500" height="10" fill="#fbf4dc"/><rect x="15" y="37.500" width="6.500" height="10" fill="#d4f0ff"/>
<path d="M15 37.500H9.500Q7.500 37.500 7.500 39.500V45.500Q7.500 47.500 9.500 47.500H15" fill="none" stroke="#e04030" stroke-width="1.200"/><path d="M15 37.500H19.500Q21.500 37.500 21.500 39.500V45.500Q21.500 47.500 19.500 47.500H15" fill="none" stroke="#1b66ad" stroke-width="1.200"/>
<path d="M9.500 39.500H14M9.500 42.500H14M9.500 45.500H14" stroke="#e04030" stroke-width="1.100"/><path d="M15.500 39.500H20M15.500 42.500H20M15.500 45.500H20" stroke="#1b66ad" stroke-width="1.100"/>
<path d="M28.500 37.500H31V41H34.500V47.500H28.500Z" fill="#f5ecd0" stroke="#e04030" stroke-width="1.200" stroke-linejoin="round"/><path d="M39.500 37.500H42.500V47.500H36.500V41.500H39.500Z" fill="#c4e8fb" stroke="#1b66ad" stroke-width="1.200" stroke-linejoin="round"/><rect x="33.500" y="37" width="4" height="2.500" rx="1" fill="#fff" stroke="#a0a0a0" stroke-width="0.800"/>
</svg>
<div class="abs" style="left:49px;top:37px;font-size:10.3px;line-height:12px;white-space:pre;letter-spacing:-0.25px;letter-spacing:-0.43px">USDJPY, M5:&nbsp; US Dollar vs Japanese Yen</div>
<div class="abs" style="left:6px;top:53px;width:187px;height:23px;background:#fff"></div>
<div class="abs" style="left:6px;top:53px;width:44px;height:23px;background:linear-gradient(#f04a4a,#d82a2a);border:1px solid #c40000;border-bottom:none"></div>
<div class="abs" style="left:149px;top:53px;width:44px;height:23px;background:linear-gradient(#f04a4a,#d82a2a);border:1px solid #c40000;border-bottom:none"></div>
<div class="abs" style="left:6px;top:75px;width:93px;height:35px;background:linear-gradient(#d83030,#cc1c1c 50%,#b80a0a)"></div>
<div class="abs" style="left:101px;top:75px;width:92px;height:35px;background:linear-gradient(#d83030,#cc1c1c 50%,#b80a0a)"></div>
<div class="abs" style="left:10px;top:75px;width:36px;height:1px;background:#e8a080"></div>
<div class="abs" style="left:153px;top:75px;width:36px;height:1px;background:#e8a080"></div>
<div class="abs" style="left:6px;top:56px;width:44px;text-align:center;color:#fff;font-size:11.5px;line-height:16px;letter-spacing:-1.1px">SELL</div>
<div class="abs" style="left:149px;top:56px;width:44px;text-align:center;color:#fff;font-size:11.5px;line-height:16px;letter-spacing:-1.1px">BUY</div>
<div class="abs" style="left:52px;top:53px;width:95px;height:20px;background:#f8f8f6;border:1px dotted #dde3dd"></div>
<div class="abs" style="left:71px;top:53px;width:57px;height:20px;background:#fff;border-left:1px dotted #b0b0b0;border-right:1px dotted #b0b0b0;border-top:1px dotted #dde3dd;border-bottom:1px dotted #dde3dd"></div>
<div class="abs" style="left:71px;top:56px;width:54px;text-align:right;color:#1e5a96;font-size:11px;line-height:14px;letter-spacing:-0.3px">0.18</div>
<svg class="abs" style="left:52px;top:53px" width="95" height="20" viewBox="0 0 95 20"><path d="M6.500 8H12.500L9.500 11.500Z" fill="#000"/><path d="M81.500 11.500H87.500L84.500 8Z" fill="#000"/></svg>
<div class="abs" style="left:24px;top:94px;color:#fff;font-size:11px;line-height:12px;letter-spacing:-0.1px">148</div>
<div class="abs" style="left:46.5px;top:76px;color:#fff;font-size:30px;line-height:34px;letter-spacing:-1.5px">30</div>
<div class="abs" style="left:83px;top:82px;color:#fff;font-size:10.5px;line-height:12px;font-weight:bold">5</div>
<div class="abs" style="left:118px;top:94px;color:#fff;font-size:11px;line-height:12px;letter-spacing:-0.1px">148</div>
<div class="abs" style="left:141px;top:76px;color:#fff;font-size:30px;line-height:34px;letter-spacing:-3.5px">31</div>
<div class="abs" style="left:178px;top:82px;color:#fff;font-size:10.5px;line-height:12px;font-weight:bold">2</div>
<div class="abs" style="left:0;top:788px;width:1920px;height:24px;background:#f0f0f0"></div>
<div class="abs" style="left:0;top:787px;width:1920px;height:1px;background:#000"></div>
<div class="abs" style="left:0;top:790px;width:1px;height:16px;background:#8a8a8a"></div>
<div class="abs" style="left:166px;top:787px;width:84px;height:19px;background:#fff;border:1px solid #000;border-top:none;box-shadow:1px 1px 0 #b0b0b0"></div>
<div class="ctab" style="left:15.5px;letter-spacing:-0.59px">USDJPY,H4</div>
<div class="ctab" style="left:96.5px;letter-spacing:-0.59px">USDJPY,H1</div>
<div class="ctab" style="left:178.5px;color:#000;letter-spacing:-0.51px">USDJPY,M5</div>
<div class="ctab" style="left:262px;letter-spacing:-0.61px">EURUSD,H4</div>
<div class="ctab" style="left:347px;letter-spacing:-0.61px">EURUSD,H1</div>
<div class="ctab" style="left:432px;letter-spacing:-0.51px">EURUSD,M15</div>
<div class="ctab" style="left:526px;letter-spacing:-0.64px">EURJPY,H4</div>
<div class="ctab" style="left:607px;letter-spacing:-0.64px">EURJPY,H1</div>
<div class="ctab" style="left:688px;letter-spacing:-0.55px">EURJPY,M15</div>
<div class="csep" style="left:84px"></div>
<div class="csep" style="left:335px"></div>
<div class="csep" style="left:420px"></div>
<div class="csep" style="left:513px"></div>
<div class="csep" style="left:594px"></div>
<div class="csep" style="left:675px"></div>
<svg class="abs" style="left:1878px;top:790px" width="36" height="14" viewBox="0 0 36 14"><path d="M8.500 3.500V10.500L5 7Z" fill="#b4b4b4"/><path d="M25.500 3.500V10.500L29 7Z" fill="#b4b4b4"/></svg>
<div class="abs" style="left:0;top:812px;width:1920px;height:1px;background:#a0a0a0"></div>
<div class="abs" style="left:0;top:813px;width:1920px;height:171px;background:#f0f0f0"></div>
<div class="abs" style="left:0;top:813px;width:16px;height:171px;background:#b8cce0"></div>
<div class="abs" style="left:16px;top:813px;width:1887px;height:146px;background:#fff"></div>
<svg class="abs" style="left:3px;top:819px" width="10" height="10" viewBox="0 0 10 10"><path d="M1.500 1.500L8.500 8.500M8.500 1.500L1.500 8.500" stroke="#000" stroke-width="1.400"/></svg>
<div class="abs" style="left:-32px;top:931px;width:80px;height:14px;line-height:14px;font-size:12.5px;color:#141430;transform:rotate(-90deg);white-space:nowrap;text-align:left;letter-spacing:-3.25px">ツールボックス</div>
<div class="hd" style="left:18px;width:160px;text-align:left;padding-left:6.500px">時間</div>
<div class="hd" style="left:178px;width:152px">銘柄</div>
<div class="hd" style="left:330px;width:118px"><span style="letter-spacing:-3.50px">チケット</span></div>
<div class="hd" style="left:448px;width:101px"><span style="letter-spacing:-2.90px">タイプ</span></div>
<div class="hd" style="left:549px;width:169px">数量</div>
<div class="hd" style="left:718px;width:169px">価格</div>
<div class="hd" style="left:887px;width:169px">決済逆指値(S/L)</div>
<div class="hd" style="left:1056px;width:169px">決済指値(T/P)</div>
<div class="hd" style="left:1225px;width:140px">時間</div>
<div class="hd" style="left:1365px;width:169px">価格</div>
<div class="hd" style="left:1534px;width:369px;border-right:none">損益</div>
<svg class="abs" style="left:65px;top:821px" width="10" height="6" viewBox="0 0 10 6"><path d="M1 5H8L4.500 1.500Z" fill="#000"/></svg>
<div class="row" style="top:837px;background:#ebebeb">
<div class="c" style="left:0px;width:160px;text-align:left;padding-left:21.500px">2025.09.04 02:37:32</div>
<div class="c" style="left:160px;width:152px">usdjpy</div>
<div class="c" style="left:312px;width:118px">925601907</div>
<div class="c" style="left:430px;width:101px">buy</div>
<div class="c" style="left:531px;width:169px">0.18</div>
<div class="c" style="left:700px;width:169px">148.064</div>
<div class="c" style="left:869px;width:169px;background:#ffa0a0">148.152</div>
<div class="c" style="left:1038px;width:169px">148.453</div>
<div class="c" style="left:1207px;width:140px">2025.09.04 04:38:55</div>
<div class="c" style="left:1347px;width:169px">148.152</div>
<div class="c" style="left:1516px;width:369px;color:#2020f0;border-right:none;padding-right:4px">1 584</div>
<svg class="abs" style="left:4px;top:2px" width="12" height="16" viewBox="0 0 12 16"><rect x="1" y="1" width="9.500" height="13.500" rx="2" fill="#fff" stroke="#1b66ad" stroke-width="1.200"/><path d="M4 4.500H7.500M4 7.500H7" stroke="#1b66ad" stroke-width="1.100"/></svg>
</div>
<div class="row" style="top:857px;background:#fff">
<div class="c" style="left:0px;width:160px;text-align:left;padding-left:21.500px">2025.09.04 04:41:28</div>
<div class="c" style="left:160px;width:152px">usdjpy</div>
<div class="c" style="left:312px;width:118px">925808361</div>
<div class="c" style="left:430px;width:101px">buy</div>
<div class="c" style="left:531px;width:169px">0.18</div>
<div class="c" style="left:700px;width:169px">148.176</div>
<div class="c" style="left:869px;width:169px;background:#ffa0a0">148.178</div>
<div class="c" style="left:1038px;width:169px">148.621</div>
<div class="c" style="left:1207px;width:140px">2025.09.04 07:04:05</div>
<div class="c" style="left:1347px;width:169px">148.178</div>
<div class="c" style="left:1516px;width:369px;color:#2020f0;border-right:none;padding-right:4px">36</div>
<svg class="abs" style="left:4px;top:2px" width="12" height="16" viewBox="0 0 12 16"><rect x="1" y="1" width="9.500" height="13.500" rx="2" fill="#fff" stroke="#1b66ad" stroke-width="1.200"/><path d="M4 4.500H7.500M4 7.500H7" stroke="#1b66ad" stroke-width="1.100"/></svg>
</div>
<div class="row" style="top:877px;background:#ebebeb">
<div class="c" style="left:0px;width:160px;text-align:left;padding-left:21.500px">2025.09.04 06:10:04</div>
<div class="c" style="left:160px;width:152px">usdjpy</div>
<div class="c" style="left:312px;width:118px">925899373</div>
<div class="c" style="left:430px;width:101px">buy</div>
<div class="c" style="left:531px;width:169px">0.18</div>
<div class="c" style="left:700px;width:169px">148.163</div>
<div class="c" style="left:869px;width:169px">148.110</div>
<div class="c" style="left:1038px;width:169px"></div>
<div class="c" style="left:1207px;width:140px">2025.09.04 06:10:31</div>
<div class="c" style="left:1347px;width:169px">148.166</div>
<div class="c" style="left:1516px;width:369px;color:#2020f0;border-right:none;padding-right:4px">54</div>
<svg class="abs" style="left:4px;top:2px" width="12" height="16" viewBox="0 0 12 16"><rect x="1" y="1" width="9.500" height="13.500" rx="2" fill="#fff" stroke="#1b66ad" stroke-width="1.200"/><path d="M4 4.500H7.500M4 7.500H7" stroke="#1b66ad" stroke-width="1.100"/></svg>
</div>
<div class="row" style="top:897px;background:#fff">
<div class="c" style="left:0px;width:160px;text-align:left;padding-left:21.500px">2025.09.04 07:08:23</div>
<div class="c" style="left:160px;width:152px">usdjpy</div>
<div class="c" style="left:312px;width:118px">925983570</div>
<div class="c" style="left:430px;width:101px">buy</div>
<div class="c" style="left:531px;width:169px">0.18</div>
<div class="c" style="left:700px;width:169px">148.170</div>
<div class="c" style="left:869px;width:169px">148.118</div>
<div class="c" style="left:1038px;width:169px">148.612</div>
<div class="c" style="left:1207px;width:140px">2025.09.04 07:08:41</div>
<div class="c" style="left:1347px;width:169px">148.175</div>
<div class="c" style="left:1516px;width:369px;color:#2020f0;border-right:none;padding-right:4px">90</div>
<svg class="abs" style="left:4px;top:2px" width="12" height="16" viewBox="0 0 12 16"><rect x="1" y="1" width="9.500" height="13.500" rx="2" fill="#fff" stroke="#1b66ad" stroke-width="1.200"/><path d="M4 4.500H7.500M4 7.500H7" stroke="#1b66ad" stroke-width="1.100"/></svg>
</div>
<div class="row" style="top:917px;background:#ebebeb;border-bottom:none">
<div class="c" style="left:0px;width:160px;text-align:left;padding-left:21.500px">2025.09.04 07:29:16</div>
<div class="c" style="left:160px;width:152px">usdjpy</div>
<div class="c" style="left:312px;width:118px">926004812</div>
<div class="c" style="left:430px;width:101px">buy</div>
<div class="c" style="left:531px;width:169px">0.18</div>
<div class="c" style="left:700px;width:169px">148.270</div>
<div class="c" style="left:869px;width:169px;background:#ffa0a0">148.271</div>
<div class="c" style="left:1038px;width:169px">148.496</div>
<div class="c" style="left:1207px;width:140px">2025.09.04 08:40:07</div>
<div class="c" style="left:1347px;width:169px">148.271</div>
<div class="c" style="left:1516px;width:369px;color:#2020f0;border-right:none;padding-right:4px">18</div>
<svg class="abs" style="left:4px;top:2px" width="12" height="16" viewBox="0 0 12 16"><rect x="1" y="1" width="9.500" height="13.500" rx="2" fill="#fff" stroke="#1b66ad" stroke-width="1.200"/><path d="M4 4.500H7.500M4 7.500H7" stroke="#1b66ad" stroke-width="1.100"/></svg>
</div>
<div class="abs" style="left:18px;top:936px;width:1885px;height:21px;background:#c8c8c8"></div>
<svg class="abs" style="left:21px;top:940px" width="14" height="14" viewBox="0 0 14 14"><circle cx="6.500" cy="6.500" r="5" fill="none" stroke="#111" stroke-width="1.200"/><path d="M3.500 6.500H9.500M6.500 3.500V9.500" stroke="#111" stroke-width="1.200"/></svg>
<div class="abs" style="left:39.500px;top:940px;height:15px;line-height:15px;font-size:11.5px;font-weight:bold;white-space:pre;color:#1a1a1a;letter-spacing:-0.1px;letter-spacing:-0.24px">損益: 3 394  クレジット: 0  入金: 0  出金: 0  残高: 3 394</div>
<div class="abs" style="left:1800px;top:940px;width:99px;text-align:right;height:15px;line-height:15px;font-size:11.5px;font-weight:bold;white-space:pre;color:#1a1a1a">3 394</div>
<div class="abs" style="left:1911px;top:925px;width:2px;height:17px;background:#707070"></div>
<div class="abs" style="left:16px;top:959px;width:1904px;height:25px;background:#f0f0f0"></div>
<div class="abs" style="left:18px;top:959px;width:1902px;height:1px;background:#000"></div>
<div class="abs" style="left:135px;top:959px;width:68px;height:19px;background:#fff;border:1px solid #000;border-top:none;box-shadow:1px 1px 0 #b0b0b0"></div>
<div class="btab" style="left:33.5px;letter-spacing:-0.75px">取引</div>
<div class="btab" style="left:77.5px;letter-spacing:0.25px">運用比率</div>
<div class="btab" style="left:146px;color:#000;letter-spacing:-0.00px">口座履歴</div>
<div class="btab" style="left:213px;letter-spacing:-2.86px">ニュース</div>
<div class="btab" style="left:283px;letter-spacing:-1.70px">受信トレイ</div>
<div class="btab" style="left:362px;letter-spacing:-1.93px">指標カレンダー</div>
<div class="btab" style="left:450px;letter-spacing:-0.50px">会社</div>
<div class="btab" style="left:493px;letter-spacing:-3.25px">アラート</div>
<div class="btab" style="left:547px;letter-spacing:-0.50px">記事</div>
<div class="btab" style="left:590px;letter-spacing:-3.10px">ライブラリ</div>
<div class="btab" style="left:652px;letter-spacing:-2.61px">エキスパート</div>
<div class="btab" style="left:725.5px;letter-spacing:-1.13px">操作ログ</div>
<div class="abs" style="left:249px;top:968.500px;font-size:9px;line-height:9px;color:#e03030;font-weight:bold">99</div>
<div class="abs" style="left:334.500px;top:968.500px;font-size:9px;line-height:9px;color:#e03030;font-weight:bold">7</div>
<div class="bsep" style="left:67px"></div>
<div class="bsep" style="left:272px"></div>
<div class="bsep" style="left:351px"></div>
<div class="bsep" style="left:439px"></div>
<div class="bsep" style="left:483px"></div>
<div class="bsep" style="left:536px"></div>
<div class="bsep" style="left:580px"></div>
<div class="bsep" style="left:641px"></div>
<div class="bsep" style="left:715px"></div>
<svg class="abs" style="left:1680px;top:964px" width="16" height="16" viewBox="0 0 16 16"><path d="M5 6V4.500A2.500 2.500 0 0 1 10 4.500V6" fill="none" stroke="#d08a10" stroke-width="1.200"/><path d="M2.500 6H12.500L13 14H2Z" fill="#f7c600" stroke="#e0a020" stroke-width="0.800"/></svg>
<div class="abs" style="left:1700px;top:965px;font-size:11.5px;line-height:14px;color:#222;white-space:nowrap">市場</div>
<svg class="abs" style="left:1735px;top:965px" width="18" height="14" viewBox="0 0 18 14"><circle cx="8.500" cy="7.500" r="1.300" fill="#1b66ad"/><path d="M5.500 4.500A4 4 0 0 0 5.500 10.500M11.500 4.500A4 4 0 0 1 11.500 10.500M3 3A6.500 6.500 0 0 0 3 12M14 3A6.500 6.500 0 0 1 14 12" fill="none" stroke="#1b66ad" stroke-width="1.100"/></svg>
<div class="abs" style="left:1755px;top:965px;font-size:11.5px;line-height:14px;color:#222;white-space:nowrap;letter-spacing:-1px;letter-spacing:-2.50px">シグナル</div>
<svg class="abs" style="left:1803px;top:965px" width="10" height="14" viewBox="0 0 10 14"><path d="M9 2C5 2 4 5 4 6C2 6.500 1.500 8 1.500 9C1.500 11 3 11.500 4.500 11.500H9" fill="#cfe8fb" stroke="#1b66ad" stroke-width="1.200"/></svg>
<div class="abs" style="left:0;top:984px;width:1920px;height:1px;background:#a0a0a0"></div>
<div class="abs" style="left:0;top:985px;width:1920px;height:21px;background:#f0f0f0"></div>
<div class="st" style="left:3px;letter-spacing:-1.84px">F1を押してヘルプを開く</div>
<div class="ssep" style="left:1160px"></div>
<div class="ssep" style="left:1263px"></div>
<div class="ssep" style="left:1361px"></div>
<div class="ssep" style="left:1446px"></div>
<div class="ssep" style="left:1533px"></div>
<div class="ssep" style="left:1619px"></div>
<div class="ssep" style="left:1705px"></div>
<div class="ssep" style="left:1800px"></div>
<div class="st" style="left:1166px">atari3</div>
<div class="st" style="left:1269px">2025.09.04 04:25</div>
<div class="st" style="left:1367px">O: 148.232</div>
<div class="st" style="left:1453px">H: 148.232</div>
<div class="st" style="left:1539px">L: 148.198</div>
<div class="st" style="left:1625px">C: 148.224</div>
<div class="abs" style="left:1806px;top:999px;width:2px;height:3px;background:#20b020"></div><div class="abs" style="left:1809px;top:997px;width:2px;height:5px;background:#20b020"></div>
<div class="abs" style="left:1811px;top:959px;width:109px;height:47px;background:#000"></div>
<div class="abs" style="left:1811px;top:960px;width:96px;text-align:center;color:#fff;font-size:12px;line-height:15px;letter-spacing:-0.85px">18:46:11</div>
<div class="abs" style="left:1811px;top:974px;width:96px;text-align:center;color:#fff;font-size:12px;line-height:16px;letter-spacing:0.8px">木曜日</div>
<div class="abs" style="left:1817px;top:991.500px;width:70px;text-align:left;color:#fff;font-size:12px;line-height:15px;letter-spacing:0.35px;white-space:nowrap">2025/09/04</div>
</body></html>
